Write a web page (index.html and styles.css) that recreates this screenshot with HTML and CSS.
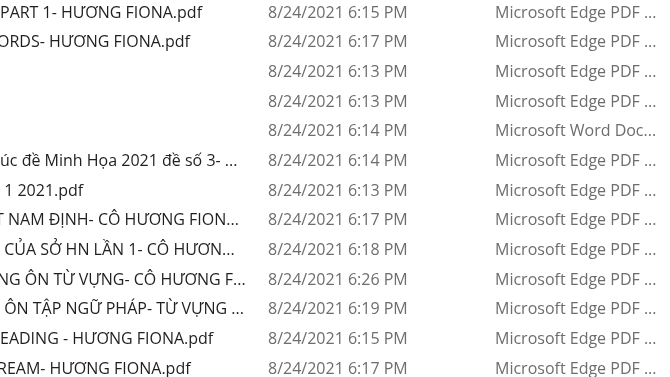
FILE: index.html
```html
<!DOCTYPE html>
<html>
<head>
	<meta charset="utf-8">
	<title>Files</title>
	<link rel="stylesheet" href="styles.css">
</head>
<body>
	<div class="list">
		<div class="row"><span class="name">PART 1- HƯƠNG FIONA.pdf</span><span class="date">8/24/2021 6:15 PM</span><span class="type">Microsoft Edge PDF ...</span></div>
		<div class="row"><span class="name cut">ORDS- HƯƠNG FIONA.pdf</span><span class="date">8/24/2021 6:17 PM</span><span class="type">Microsoft Edge PDF ...</span></div>
		<div class="row"><span class="name"></span><span class="date">8/24/2021 6:13 PM</span><span class="type">Microsoft Edge PDF ...</span></div>
		<div class="row"><span class="name"></span><span class="date">8/24/2021 6:13 PM</span><span class="type">Microsoft Edge PDF ...</span></div>
		<div class="row"><span class="name"></span><span class="date">8/24/2021 6:14 PM</span><span class="type">Microsoft Word Doc...</span></div>
		<div class="row"><span class="name">úc đề Minh Họa 2021 đề số 3- ...</span><span class="date">8/24/2021 6:14 PM</span><span class="type">Microsoft Edge PDF ...</span></div>
		<div class="row"><span class="name"> 1 2021.pdf</span><span class="date">8/24/2021 6:13 PM</span><span class="type">Microsoft Edge PDF ...</span></div>
		<div class="row"><span class="name half">T NAM ĐỊNH- CÔ HƯƠNG FION...</span><span class="date">8/24/2021 6:17 PM</span><span class="type">Microsoft Edge PDF ...</span></div>
		<div class="row"><span class="name"> CỦA SỞ HN LẦN 1- CÔ HƯƠN...</span><span class="date">8/24/2021 6:18 PM</span><span class="type">Microsoft Edge PDF ...</span></div>
		<div class="row"><span class="name cut">NG ÔN TỪ VỰNG- CÔ HƯƠNG F...</span><span class="date">8/24/2021 6:26 PM</span><span class="type">Microsoft Edge PDF ...</span></div>
		<div class="row"><span class="name"> ÔN TẬP NGỮ PHÁP- TỪ VỰNG ...</span><span class="date">8/24/2021 6:19 PM</span><span class="type">Microsoft Edge PDF ...</span></div>
		<div class="row"><span class="name">EADING - HƯƠNG FIONA.pdf</span><span class="date">8/24/2021 6:15 PM</span><span class="type">Microsoft Edge PDF ...</span></div>
		<div class="row"><span class="name cut">REAM- HƯƠNG FIONA.pdf</span><span class="date">8/24/2021 6:17 PM</span><span class="type">Microsoft Edge PDF ...</span></div>
	</div>
</body>
</html>
```

FILE: styles.css
```css
body
{
	margin: 0;
	background: #fff;
	overflow: hidden;
	font-family: "Open Sans", "Noto Sans", sans-serif;
	font-size: 16px;
}

.list
{
	margin-top: -2.5px;
	filter: blur(0.4px);
}

.row
{
	display: grid;
	grid-template-columns: 268px 227px 1fr;
	height: 29.7px;
	line-height: 29.7px;
	white-space: pre;
}

.name
{
	color: #1f1f1f;
	overflow: hidden;
}

.name.cut
{
	text-indent: -3px;
}

.name.half
{
	text-indent: -5px;
}

.date, .type
{
	color: #6d6d6d;
}
```
